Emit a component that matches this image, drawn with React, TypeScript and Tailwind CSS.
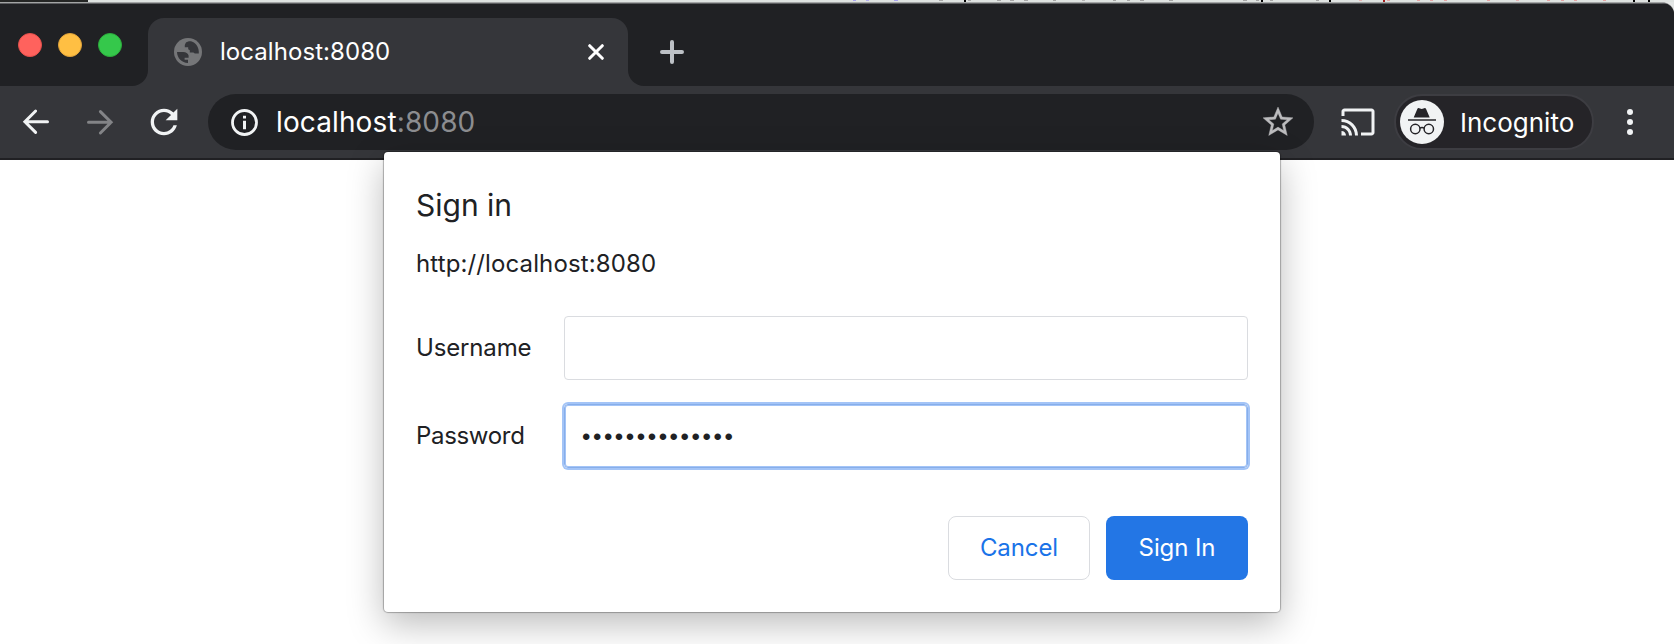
type Mark = { x: number; w: number; fill: string };

const CODE_MARKS: Mark[] = [
  { x: 853, w: 3, fill: '#a9a4ee' },
  { x: 866, w: 3, fill: '#b5b0ee' },
  { x: 894, w: 4, fill: '#a9a4ee' },
  { x: 939, w: 4, fill: '#aaaaaa' },
  { x: 964, w: 2, fill: '#000000' },
  { x: 968, w: 3, fill: '#aaaaaa' },
  { x: 997, w: 4, fill: '#a6a6a6' },
  { x: 1010, w: 4, fill: '#a6a6a6' },
  { x: 1024, w: 4, fill: '#a6a6a6' },
  { x: 1053, w: 3, fill: '#a6a6a6' },
  { x: 1082, w: 3, fill: '#b5b5b5' },
  { x: 1113, w: 3, fill: '#a6a6a6' },
  { x: 1127, w: 3, fill: '#a6a6a6' },
  { x: 1140, w: 4, fill: '#a6a6a6' },
  { x: 1169, w: 4, fill: '#a6a6a6' },
  { x: 1243, w: 4, fill: '#a6a6a6' },
  { x: 1256, w: 3, fill: '#a6a6a6' },
  { x: 1261, w: 2, fill: '#000000' },
  { x: 1270, w: 3, fill: '#a6a6a6' },
  { x: 1316, w: 3, fill: '#a6a6a6' },
  { x: 1329, w: 2, fill: '#000000' },
  { x: 1359, w: 3, fill: '#e5b4b4' },
  { x: 1383, w: 2, fill: '#a81e1e' },
  { x: 1387, w: 3, fill: '#e5a4a4' },
  { x: 1417, w: 3, fill: '#e5a4a4' },
  { x: 1430, w: 3, fill: '#e5a4a4' },
  { x: 1444, w: 3, fill: '#e5a4a4' },
  { x: 1487, w: 3, fill: '#e5a4a4' },
  { x: 1516, w: 3, fill: '#e5b4b4' },
  { x: 1547, w: 3, fill: '#e5a4a4' },
  { x: 1561, w: 3, fill: '#e5a4a4' },
  { x: 1574, w: 3, fill: '#e5a4a4' },
  { x: 1603, w: 3, fill: '#e5a4a4' },
  { x: 1633, w: 2, fill: '#000000' },
  { x: 1648, w: 2, fill: '#000000' },
];

function BackdropEdge() {
  return (
    <div className="flex h-[2px] w-full bg-[#dfe3e1]">
      <div className="w-[88px] bg-[#242524]" />
      <svg className="h-[2px] flex-1" viewBox="88 0 1586 2" shapeRendering="crispEdges">
        {CODE_MARKS.map((m) => (
          <rect
            key={m.x}
            x={m.x}
            y="0"
            width={m.w}
            height={m.fill === '#000000' || m.fill === '#a81e1e' ? 2 : 1}
            fill={m.fill}
          />
        ))}
      </svg>
    </div>
  );
}

function GlobeIcon() {
  return (
    <svg className="size-7 shrink-0" viewBox="0 0 28 28">
      <circle cx="14" cy="14" r="14" fill="#757678" />
      <path
        fill="#35363a"
        d="M17.8 3.4C15.2 3 13.4 3.4 11.8 4.8L10.8 7V9.2H14.2V11.2L15.8 12.2V14.4H19.4L20.8 15.6H24.8C25.2 9.8 22.4 5.2 17.8 3.4Z"
      />
      <path
        fill="#35363a"
        d="M3 14H9.2C12 14 14 15.4 14.6 17.6V19.8H10.6V21.8H14V24.9C8 25 3.2 20.2 3 14Z"
      />
    </svg>
  );
}

function TabStrip() {
  return (
    <div className="flex h-[82px] w-full">
      <div className="flex w-[148px] gap-4 rounded-br-2xl bg-[#202124] pl-[18px] pt-[29px]">
        <span className="size-6 rounded-full border border-[#e5504c] bg-[#ff625d]" />
        <span className="size-6 rounded-full border border-[#e0a33a] bg-[#ffbf43]" />
        <span className="size-6 rounded-full border border-[#2cac3c] bg-[#35c84b]" />
      </div>
      <div className="w-[480px] bg-[#202124] pt-[14px]">
        <div className="flex h-[68px] items-center rounded-t-2xl bg-[#35363a] pl-[26px] pr-6">
          <GlobeIcon />
          <span className="ml-[18px] flex-1 text-2xl tracking-[0.06px] text-white">localhost:8080</span>
          <svg className="size-4" viewBox="0 0 16 16" stroke="#fff" strokeWidth="3" strokeLinecap="round">
            <path d="M1.7 1.7 14.3 14.3M14.3 1.7 1.7 14.3" />
          </svg>
        </div>
      </div>
      <div className="flex-1 rounded-bl-2xl bg-[#202124] pl-8 pt-9">
        <svg className="size-6" viewBox="0 0 24 24" stroke="#bdc1c6" strokeWidth="4" strokeLinecap="round">
          <path d="M12 2V22M2 12H22" />
        </svg>
      </div>
    </div>
  );
}

function ArrowIcon({ forward = false }: { forward?: boolean }) {
  return (
    <svg
      className={forward ? 'size-8 rotate-180' : 'size-8'}
      viewBox="0 0 32 32"
      fill="none"
      stroke={forward ? '#838487' : '#f1f3f4'}
      strokeWidth="3"
      strokeLinecap="round"
    >
      <path d="M5 15.7H27.5M15.6 5 4.9 15.7 15.6 26.4" />
    </svg>
  );
}

function IncognitoBadge() {
  return (
    <svg className="size-11 shrink-0" viewBox="0 0 44 44">
      <circle cx="22" cy="22" r="22" fill="#f1f3f4" />
      <path fill="#252428" d="M17.2 9.2Q17.8 7.8 19.2 8.2L21.7 9 24.2 8.2Q25.6 7.8 26.2 9.2L29.7 17.4H13.7Z" />
      <path stroke="#252428" strokeWidth="1.6" d="M8 20H36" />
      <g fill="none" stroke="#252428" strokeWidth="1.5">
        <circle cx="15.3" cy="29" r="4.7" />
        <circle cx="28.8" cy="29" r="4.7" />
        <path d="M19.8 28.2Q22 27 24.2 28.2" />
      </g>
    </svg>
  );
}

function Toolbar() {
  return (
    <div className="flex h-[74px] w-full items-center border-b-2 border-[#202023] bg-[#35363a] pl-5">
      <ArrowIcon />
      <span className="w-8" />
      <ArrowIcon forward />
      <svg className="ml-7 size-10" viewBox="0 0 24 24" fill="#f1f3f4">
        <path d="M17.65 6.35C16.2 4.9 14.21 4 12 4c-4.42 0-7.99 3.58-7.99 8s3.57 8 7.99 8c3.73 0 6.84-2.55 7.73-6h-2.08c-.82 2.33-3.04 4-5.65 4-3.31 0-6-2.69-6-6s2.69-6 6-6c1.66 0 3.14.69 4.22 1.78L13 11h7V4l-2.35 2.35z" />
      </svg>
      <div className="ml-6 flex h-14 w-[1106px] items-center rounded-full bg-[#202124] pl-[22px] pr-[18px]">
        <svg className="size-7" viewBox="0 0 28 28" fill="none" stroke="#f1f3f4">
          <circle cx="14.5" cy="14.5" r="12" strokeWidth="2.8" />
          <path strokeWidth="3" d="M14.5 12.8V21.2M14.5 7.8V10.6" />
        </svg>
        <span className="ml-[18px] flex-1 text-[28px] tracking-[0.12px] text-white">
          localhost<span className="text-[#8c8d90]">:8080</span>
        </span>
        <svg className="size-9" viewBox="0 0 24 24" fill="#bcbcbe" stroke="#bcbcbe" strokeWidth="0.25">
          <path d="M22 9.24l-7.19-.62L12 2 9.19 8.63 2 9.24l5.46 4.73L5.82 21 12 17.27 18.18 21l-1.63-7.03L22 9.24zM12 15.4l-3.76 2.27 1-4.28-3.32-2.88 4.38-.38L12 6.1l1.71 4.04 4.38.38-3.32 2.88 1 4.28L12 15.4z" />
        </svg>
      </div>
      <svg className="ml-[26px] size-9" viewBox="0 0 24 24" fill="#f1f3f4">
        <path d="M21 3H3c-1.1 0-2 .9-2 2v3h2V5h18v14h-7v2h7c1.1 0 2-.9 2-2V5c0-1.1-.9-2-2-2zM1 18v3h3c0-1.66-1.34-3-3-3zm0-4v2c2.76 0 5 2.24 5 5h2c0-3.87-3.13-7-7-7zm0-4v2c4.97 0 9 4.03 9 9h2c0-6.08-4.93-11-11-11z" />
      </svg>
      <div className="ml-[18px] flex h-14 w-[200px] items-center rounded-full border-2 border-[#3d3d42] bg-[#252428] pl-1">
        <IncognitoBadge />
        <span className="ml-4 text-[26px] text-white">Incognito</span>
      </div>
      <div className="ml-[33px] flex flex-col gap-1">
        <span className="size-1.5 rounded-full bg-[#f1f3f4]" />
        <span className="size-1.5 rounded-full bg-[#f1f3f4]" />
        <span className="size-1.5 rounded-full bg-[#f1f3f4]" />
      </div>
    </div>
  );
}

function SignInDialog() {
  return (
    <form className="absolute left-[384px] top-[152px] flex h-[460px] w-[896px] flex-col rounded-[4px] bg-white px-8 pt-8 text-2xl text-[#202124] shadow-[0_0_1px_1px_rgba(0,0,0,0.28),0_12px_36px_rgba(0,0,0,0.27)]">
      <h1 className="text-[30px] leading-[43px]">Sign in</h1>
      <p className="mt-[21px] leading-8 tracking-[0.12px]">http://localhost:8080</p>
      <div className="mt-9 grid grid-cols-[148px_684px] items-center gap-y-6">
        <label htmlFor="username" className="tracking-[-0.15px]">
          Username
        </label>
        <input id="username" type="text" className="h-16 rounded-[4px] border border-[#dadce0] px-[18px] outline-none" />
        <label htmlFor="password" className="tracking-[-0.32px]">
          Password
        </label>
        <input
          id="password"
          type="password"
          defaultValue="localhost-8080"
          className="h-16 rounded-[4px] border border-[#87aeea] px-[17px] pt-0.5 font-['Liberation_Sans',sans-serif] tracking-[2.55px] shadow-[0_0_0_2px_#a3c4f7,inset_0_0_0_1px_#a3c4f7] outline-none"
        />
      </div>
      <div className="mt-12 flex justify-end gap-4">
        <button type="button" className="h-16 w-[142px] rounded-lg border border-[#dadce0] tracking-[-0.1px] text-[#1a73e8]">
          Cancel
        </button>
        <button type="button" className="h-16 w-[142px] rounded-lg bg-[#2376e5] tracking-[-0.1px] text-white">
          Sign In
        </button>
      </div>
    </form>
  );
}

export default function App() {
  return (
    <div className="relative h-[644px] w-[1674px] overflow-hidden bg-white font-['Inter',sans-serif]">
      <BackdropEdge />
      <div className="bg-[#e4e6e5]">
        <div className="overflow-hidden rounded-tr-[12px] border-t border-[#a3a5a5] bg-[#35363a]">
          <div className="h-px bg-[#5c5d60]" />
          <TabStrip />
          <Toolbar />
        </div>
      </div>
      <SignInDialog />
    </div>
  );
}
